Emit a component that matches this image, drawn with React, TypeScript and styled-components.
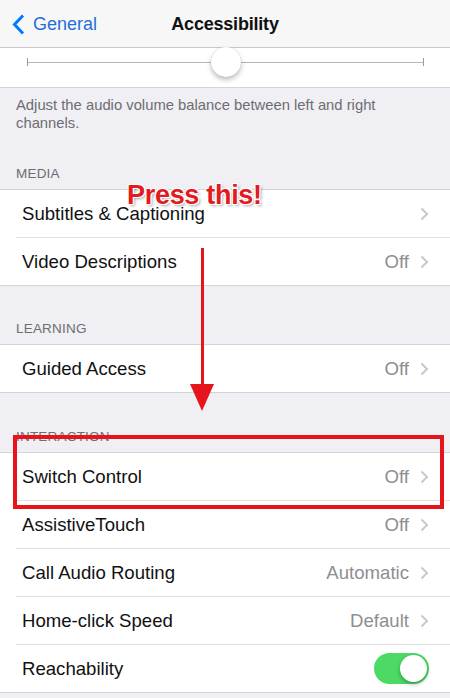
import React from 'react'
import styled, { createGlobalStyle } from 'styled-components'

const GlobalStyle = createGlobalStyle`
  html, body {
    margin: 0;
    padding: 0;
    background: #efeff4;
    font-family: "Liberation Sans", Arial, sans-serif;
    -webkit-font-smoothing: antialiased;
  }
`

type Row = { label: string; value?: string; toggle?: boolean; chevron?: boolean }

const media: Row[] = [
  { label: 'Subtitles & Captioning', chevron: true },
  { label: 'Video Descriptions', value: 'Off', chevron: true },
]

const learning: Row[] = [{ label: 'Guided Access', value: 'Off', chevron: true }]

const interaction: Row[] = [
  { label: 'Switch Control', value: 'Off', chevron: true },
  { label: 'AssistiveTouch', value: 'Off', chevron: true },
  { label: 'Call Audio Routing', value: 'Automatic', chevron: true },
  { label: 'Home-click Speed', value: 'Default', chevron: true },
  { label: 'Reachability', toggle: true },
]

const Chevron = () => (
  <svg width="9" height="14" viewBox="0 0 9 14">
    <path d="M1.5 1.5 L7 7 L1.5 12.5" fill="none" stroke="#c7c7cc" strokeWidth="2" />
  </svg>
)

const BackChevron = () => (
  <svg width="13" height="21" viewBox="0 0 13 21">
    <path d="M11 1.5 L2.5 10.5 L11 19.5" fill="none" stroke="#007aff" strokeWidth="3" />
  </svg>
)

const Group = ({ rows }: { rows: Row[] }) => (
  <GroupBox>
    {rows.map((r, i) => (
      <Cell key={i}>
        <CellInner last={i === rows.length - 1}>
          <Label>{r.label}</Label>
          <Right>
            {r.value && <Value>{r.value}</Value>}
            {r.chevron && <Chevron />}
            {r.toggle && (
              <Switch>
                <Knob />
              </Switch>
            )}
          </Right>
        </CellInner>
      </Cell>
    ))}
  </GroupBox>
)

const App: React.FC = () => {
  return (
    <>
      <GlobalStyle />
      <Screen>
        <NavBar>
          <Back>
            <BackChevron />
            <span>General</span>
          </Back>
          <Title>Accessibility</Title>
        </NavBar>

        <SliderRow>
          <Track>
            <Tick />
            <Line />
            <Tick />
            <Thumb />
          </Track>
        </SliderRow>

        <Footer>Adjust the audio volume balance between left and right channels.</Footer>

        <Header height={57}>MEDIA</Header>
        <Group rows={media} />

        <Header height={58}>LEARNING</Header>
        <Group rows={learning} />

        <Header height={59}>INTERACTION</Header>
        <Group rows={interaction} />

        <Callout>Press this!</Callout>
        <ArrowShaft />
        <ArrowHead />
        <Highlight />
      </Screen>
    </>
  )
}

const Screen = styled.div`
  position: relative;
  width: 450px;
  height: 698px;
  overflow: hidden;
  background: #efeff4;
`

const NavBar = styled.div`
  position: relative;
  height: 48px;
  padding-top: 2px;
  background: #f7f7f8;
  border-bottom: 1px solid #c8c7cc;
  display: flex;
  align-items: center;
  justify-content: center;
  box-sizing: border-box;
`

const Back = styled.div`
  position: absolute;
  left: 12px;
  top: 14px;
  display: flex;
  align-items: center;
  gap: 8px;
  color: #1f6fd8;
  font-size: 18px;
`

const Title = styled.div`
  font-size: 18px;
  font-weight: 700;
  color: #111;
  letter-spacing: -0.2px;
`

const SliderRow = styled.div`
  height: 40px;
  background: #fff;
  border-bottom: 1px solid #d4d3d8;
  display: flex;
  align-items: flex-start;
  padding: 9px 26px 0 27px;
  box-sizing: border-box;
`

const Track = styled.div`
  position: relative;
  flex: 1;
  display: flex;
  align-items: center;
  height: 10px;
`

const Line = styled.div`
  flex: 1;
  height: 1px;
  background: #b6b6b9;
`

const Tick = styled.div`
  width: 1px;
  height: 8px;
  background: #9a9a9e;
`

const Thumb = styled.div`
  position: absolute;
  left: 50%;
  top: 50%;
  width: 30px;
  height: 30px;
  margin: -15px 0 0 -15px;
  border-radius: 50%;
  background: #fff;
  box-shadow: 0 3px 5px rgba(0, 0, 0, 0.25), 0 0 1px rgba(0, 0, 0, 0.2);
`

const Footer = styled.div`
  padding: 8px 30px 0 16px;
  font-size: 14.8px;
  line-height: 18px;
  color: #6d6d72;
`

const Header = styled.div<{ height: number }>`
  height: ${p => p.height}px;
  display: flex;
  align-items: flex-end;
  padding: 0 16px 8px;
  box-sizing: border-box;
  font-size: 13.5px;
  color: #6d6d72;
  letter-spacing: 0.2px;
`

const GroupBox = styled.div`
  background: #fff;
  border-top: 1px solid #d4d3d8;
  border-bottom: 1px solid #d4d3d8;
`

const Cell = styled.div`
  padding-left: 16px;
`

const CellInner = styled.div<{ last: boolean }>`
  height: 47px;
  display: flex;
  align-items: center;
  justify-content: space-between;
  padding: 0 21px 0 6px;
  border-bottom: ${p => (p.last ? 'none' : '1px solid #e0e0e4')};
`

const Label = styled.div`
  font-size: 18.6px;
  color: #111;
`

const Right = styled.div`
  display: flex;
  align-items: center;
  gap: 11px;
`

const Value = styled.div`
  font-size: 18.6px;
  color: #8e8e93;
`

const Switch = styled.div`
  width: 55px;
  height: 31px;
  border-radius: 16px;
  background: #4cd964;
  position: relative;
`

const Knob = styled.div`
  position: absolute;
  right: 2px;
  top: 2px;
  width: 27px;
  height: 27px;
  border-radius: 50%;
  background: #fff;
  box-shadow: 0 2px 4px rgba(0, 0, 0, 0.3);
`

const Callout = styled.div`
  position: absolute;
  left: 127px;
  top: 180px;
  font-size: 27px;
  font-weight: 700;
  color: #e11b1f;
  letter-spacing: -0.3px;
  text-shadow: 1px 1px 0 #fff, -1px -1px 0 #fff, 1px -1px 0 #fff, -1px 1px 0 #fff, 2px 2px 3px rgba(0, 0, 0, 0.35);
`

const ArrowShaft = styled.div`
  position: absolute;
  left: 201px;
  top: 248px;
  width: 3px;
  height: 140px;
  background: #e5151b;
`

const ArrowHead = styled.div`
  position: absolute;
  left: 190px;
  top: 384px;
  width: 0;
  height: 0;
  border-left: 12px solid transparent;
  border-right: 12px solid transparent;
  border-top: 27px solid #e5151b;
`

const Highlight = styled.div`
  position: absolute;
  left: 13px;
  top: 435px;
  width: 431px;
  height: 74px;
  box-sizing: border-box;
  border: 4px solid #e5151b;
`

export default App
